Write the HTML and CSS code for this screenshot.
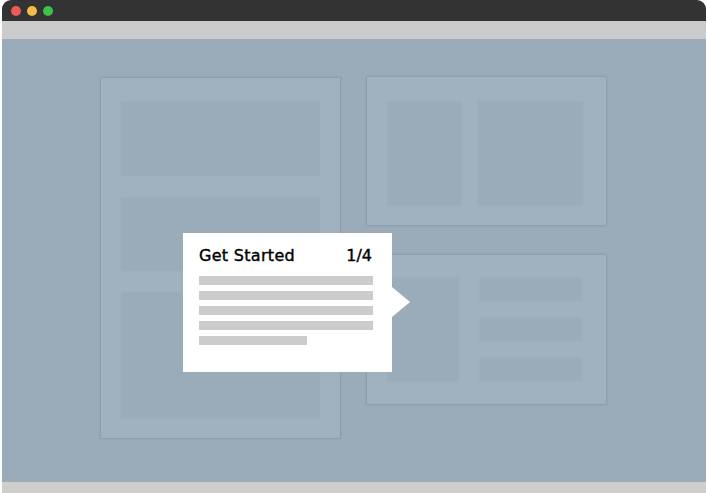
FILE: index.html
```html
<!DOCTYPE html>
<html lang="en">
<head>
<meta charset="utf-8">
<title>Onboarding tour</title>
<link rel="stylesheet" href="styles.css">
</head>
<body>
  <div class="window">
    <div class="titlebar">
      <span class="dot dot-red"></span>
      <span class="dot dot-yellow"></span>
      <span class="dot dot-green"></span>
    </div>
    <div class="toolbar"></div>
    <div class="content">
      <div class="panel panel-tall">
        <div class="block block-a"></div>
        <div class="block block-b"></div>
        <div class="block block-c"></div>
      </div>
      <div class="column">
        <div class="panel panel-split">
          <div class="block block-narrow"></div>
          <div class="block block-wide"></div>
        </div>
        <div class="panel panel-list">
          <div class="block block-side"></div>
          <div class="rows">
            <div class="block block-row"></div>
            <div class="block block-row"></div>
            <div class="block block-row"></div>
          </div>
        </div>
      </div>

      <div class="tour">
        <div class="tour-head">
          <span class="tour-title">Get Started</span>
          <span class="tour-step">1/4</span>
        </div>
        <div class="tour-lines">
          <span class="line"></span>
          <span class="line"></span>
          <span class="line"></span>
          <span class="line"></span>
          <span class="line line-short"></span>
        </div>
      </div>
    </div>
    <div class="statusbar"></div>
  </div>
</body>
</html>
```

FILE: styles.css
```css
* {
  box-sizing: border-box;
}

html,
body {
  margin: 0;
  padding: 0;
  background: #ffffff;
  overflow: hidden;
}

.window {
  margin-left: 2px;
  width: 704px;
  height: 493px;
  display: flex;
  flex-direction: column;
}

/* dark title bar with traffic-light buttons */
.titlebar {
  height: 21px;
  background: #333333;
  border-radius: 9px 9px 0 0;
  display: flex;
  align-items: center;
  gap: 6px;
  padding: 1px 0 0 9px;
}

.dot {
  width: 10px;
  height: 10px;
  border-radius: 50%;
}

.dot-red {
  background: #ec5b58;
}

.dot-yellow {
  background: #f4bb46;
}

.dot-green {
  background: #3cc14b;
}

.toolbar {
  height: 18px;
  background: #cccccc;
}

/* app canvas */
.content {
  position: relative;
  height: 443px;
  background: #9aabb9;
  display: flex;
  align-items: flex-start;
  gap: 27px;
  padding: 39px 0 0 99px;
}

.statusbar {
  flex: 1;
  background: #cecfcc;
}

.panel {
  background: #a0b1bf;
  box-shadow: 0 0 0 1px rgba(120, 140, 155, 0.25), 0 0 3px rgba(90, 110, 125, 0.25);
}

.block {
  background: #9aacba;
  box-shadow: 0 0 2px rgba(120, 140, 155, 0.3);
}

.panel-tall {
  width: 239px;
  height: 360px;
  padding: 24px 21px 20px;
  display: flex;
  flex-direction: column;
  gap: 23px;
}

.block-a {
  height: 73px;
}

.block-b {
  height: 72px;
}

.block-c {
  height: 124px;
}

.column {
  display: flex;
  flex-direction: column;
  gap: 30px;
  margin-top: -1px;
}

.panel-split {
  width: 239px;
  height: 148px;
  padding: 25px 0 0 21px;
  display: flex;
  align-items: flex-start;
  gap: 18px;
}

.block-narrow {
  width: 73px;
  height: 103px;
}

.block-wide {
  width: 103px;
  height: 103px;
}

.panel-list {
  width: 239px;
  height: 149px;
  padding: 24px 0 0 21px;
  display: flex;
  align-items: flex-start;
  gap: 22px;
}

.block-side {
  width: 70px;
  height: 102px;
}

.rows {
  display: flex;
  flex-direction: column;
  gap: 19px;
}

.block-row {
  width: 101px;
  height: 21px;
}

/* tour popover */
.tour {
  position: absolute;
  left: 181px;
  top: 194px;
  width: 209px;
  height: 139px;
  background: #ffffff;
  padding: 13px 20px 0 16px;
}

.tour::after {
  content: "";
  position: absolute;
  right: -18px;
  top: 54px;
  border-left: 18px solid #ffffff;
  border-top: 15px solid transparent;
  border-bottom: 15px solid transparent;
}

.tour-head {
  display: flex;
  justify-content: space-between;
  align-items: baseline;
  font-family: "DejaVu Sans", sans-serif;
  font-size: 16px;
  line-height: 20px;
  color: #000000;
  -webkit-text-stroke: 0.4px #000000;
}

.tour-title {
  letter-spacing: 0.3px;
}

.tour-lines {
  margin-top: 10px;
  display: flex;
  flex-direction: column;
  gap: 6px;
}

.line {
  display: block;
  width: 174px;
  height: 9px;
  background: #cccccc;
}

.line-short {
  width: 108px;
}
```
